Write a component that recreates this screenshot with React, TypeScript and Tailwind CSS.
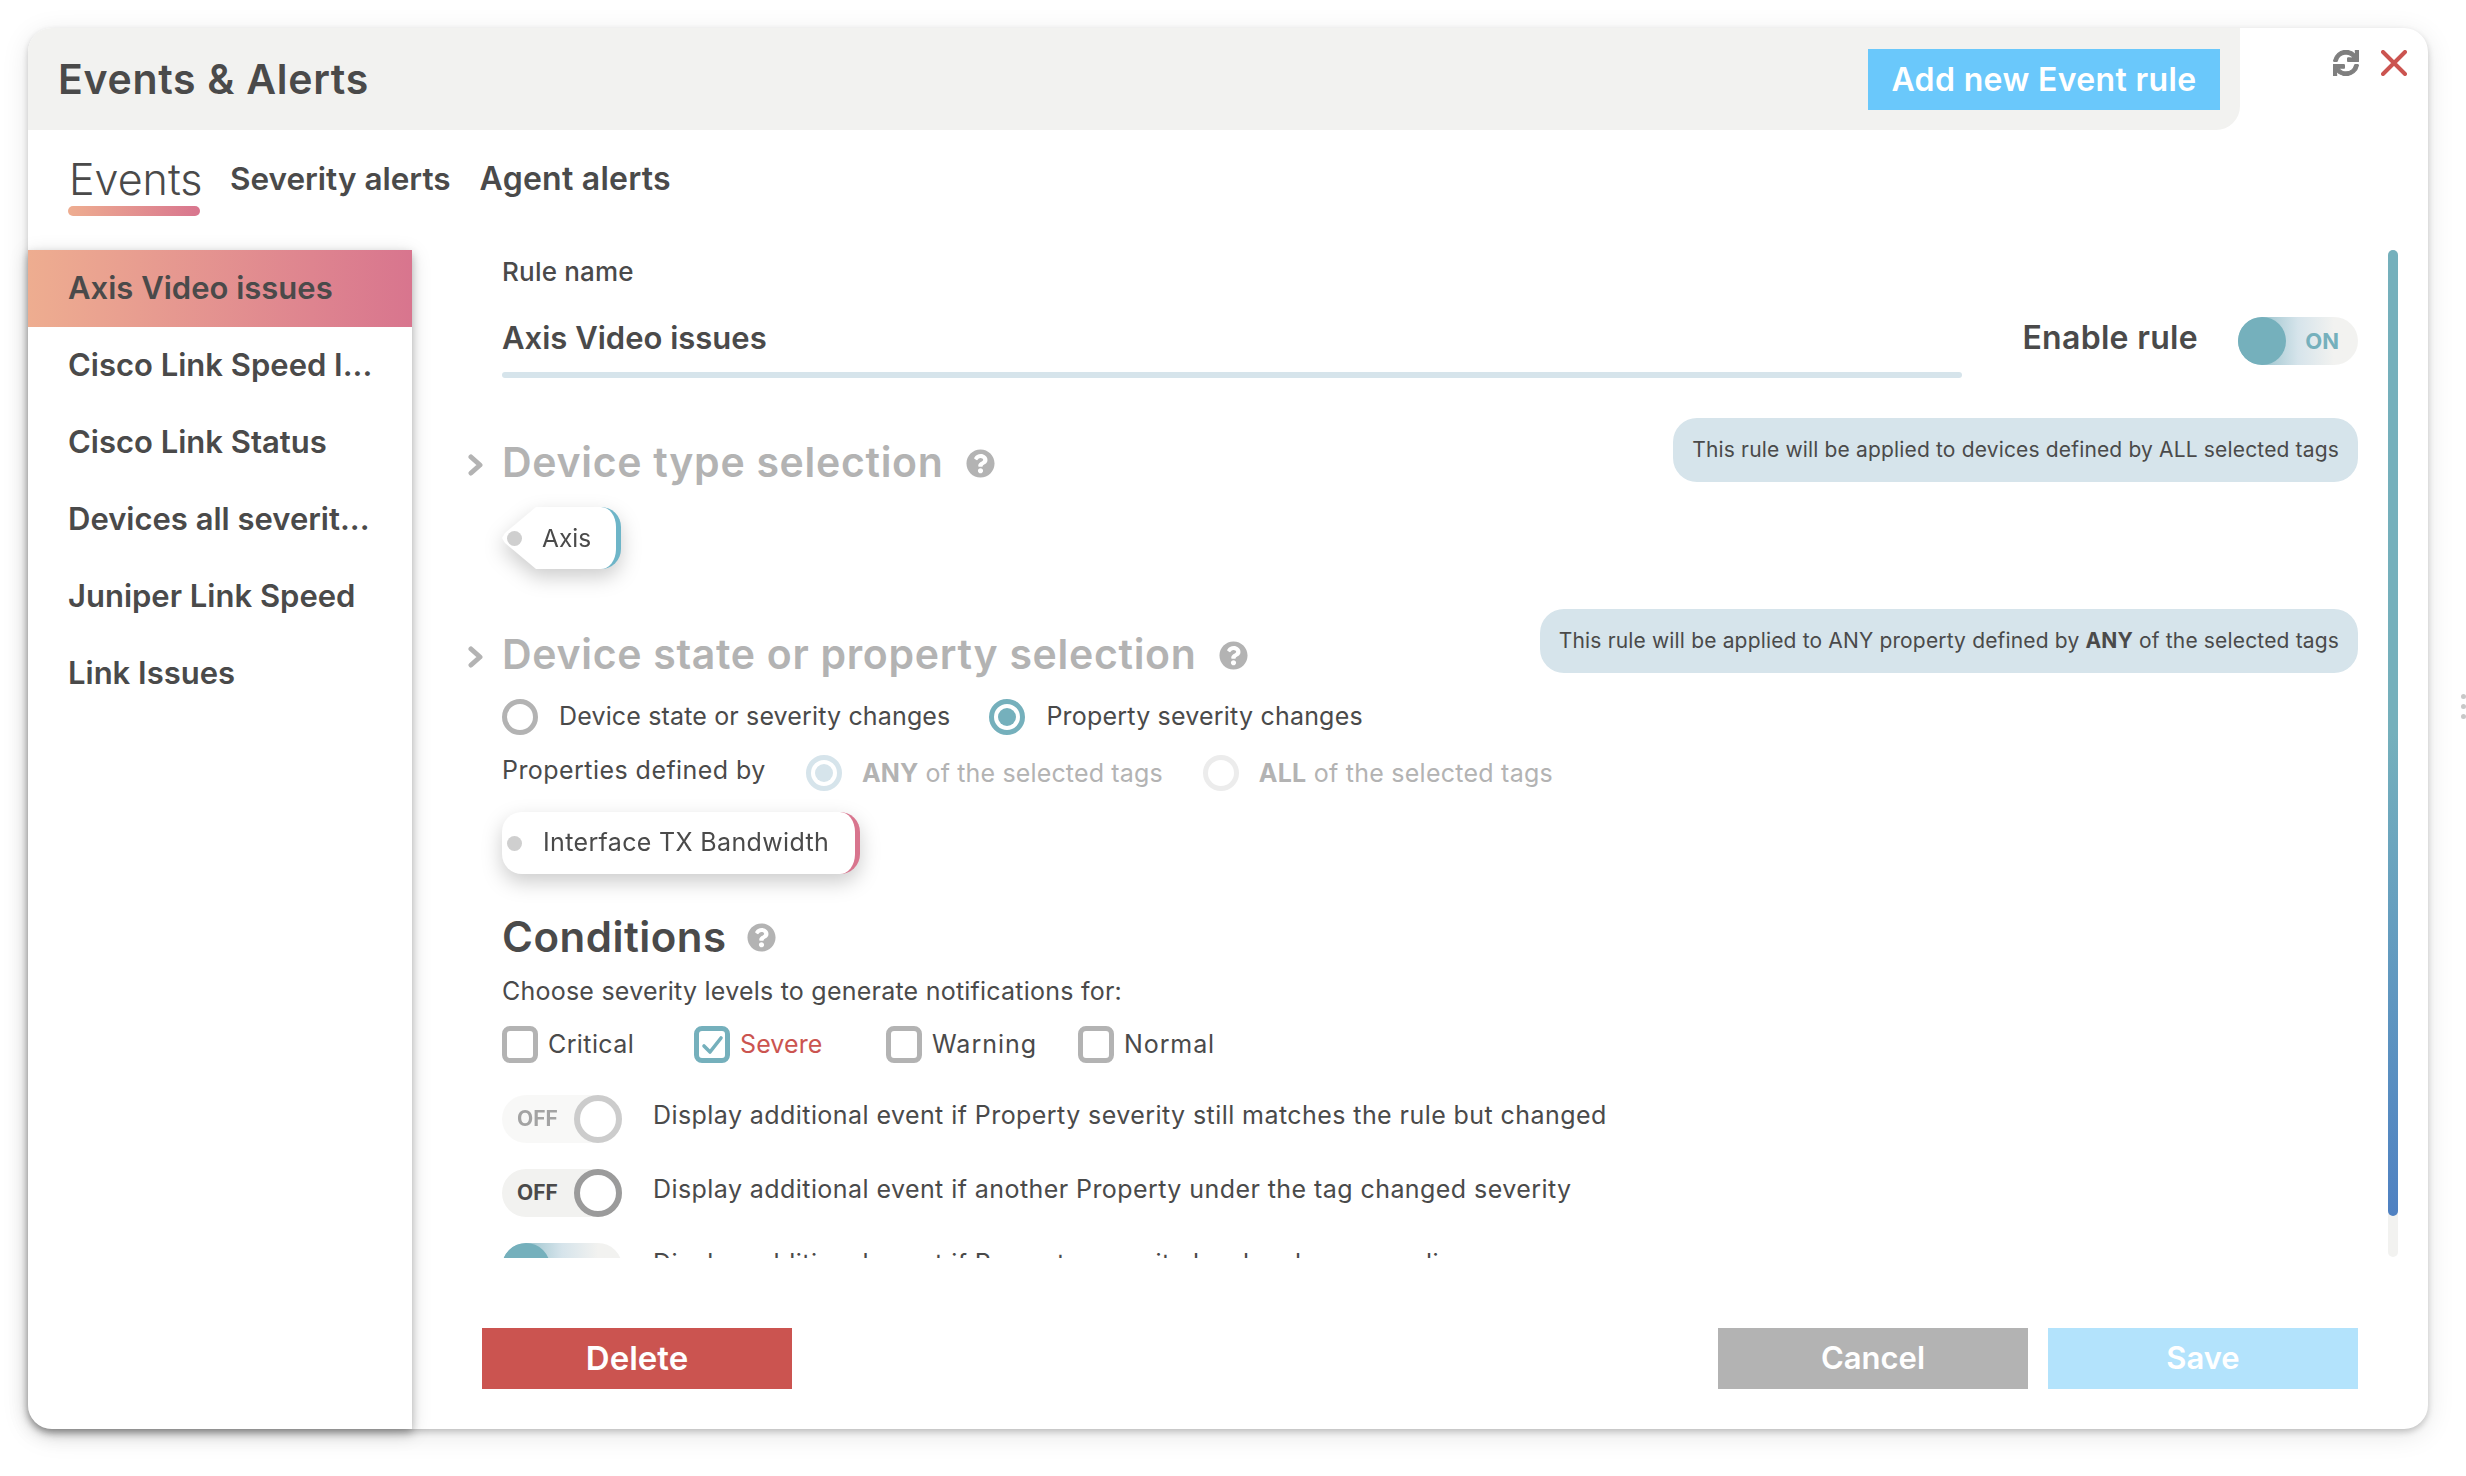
import { FaSync, FaQuestionCircle } from "react-icons/fa";

const rules = ["Axis Video issues", "Cisco Link Speed I...", "Cisco Link Status", "Devices all severit...", "Juniper Link Speed", "Link Issues"];

function Help({ className = "" }: { className?: string }) {
  return <FaQuestionCircle className={`h-[29px] w-[29px] text-[#b3b3b3] ${className}`} />;
}

function Toggle({ on, dim }: { on?: boolean; dim?: boolean }) {
  if (on) {
    return (
      <div className="relative flex h-12 w-[120px] shrink-0 items-center justify-end overflow-hidden rounded-full bg-gradient-to-r from-[#75b0bc] via-[#d6e4eb] to-[#f2f2f0] to-80% pr-[19px]">
        <div className="absolute top-0 left-0 h-12 w-12 rounded-full bg-[#75b0bc]" />
        <span className="text-[22px] font-bold text-[#75b0bc]">ON</span>
      </div>
    );
  }
  return (
    <div className={`flex h-12 w-[120px] shrink-0 items-center justify-between rounded-full bg-[#f2f2f0] pl-[15px] ${dim ? "opacity-50" : ""}`}>
      <span className="text-[21px] font-bold text-[#4a4a4a]">OFF</span>
      <div className="h-12 w-12 rounded-full border-[6px] border-[#9b9b9b] bg-white" />
    </div>
  );
}

function Radio({ checked, faded }: { checked?: boolean; faded?: boolean }) {
  const ring = checked ? (faded ? "border-[#d6e4eb]" : "border-[#75b0bc]") : faded ? "border-[#ececec]" : "border-[#b3b3b3]";
  return (
    <div className={`flex h-9 w-9 shrink-0 items-center justify-center rounded-full border-[5px] bg-white ${ring}`}>
      {checked && <div className={`h-[18px] w-[18px] rounded-full ${faded ? "bg-[#d6e4eb]" : "bg-[#75b0bc]"}`} />}
    </div>
  );
}

function Check({ label, spacing, checked }: { label: string; spacing: string; checked?: boolean }) {
  return (
    <div className="flex w-[192px] items-center gap-[10px]">
      <div className={`flex h-[37px] w-9 items-center justify-center rounded-[8px] border-[5px] ${checked ? "border-[#75b0bc]" : "border-[#b3b3b3]"}`}>
        {checked && (
          <svg viewBox="0 0 24 24" className="h-6 w-6" fill="none" stroke="#75b0bc" strokeWidth="3.6" strokeLinecap="round" strokeLinejoin="round">
            <path d="M4 13l6 6L21 5" />
          </svg>
        )}
      </div>
      <span className={`text-[25px] ${spacing} ${checked ? "text-[#cb5450]" : "text-[#4a4a4a]"}`}>{label}</span>
    </div>
  );
}

function ToggleRow({ text, on, dim }: { text: string; on?: boolean; dim?: boolean }) {
  return (
    <div className="mt-[26px] flex items-center gap-[31px]">
      <Toggle on={on} dim={dim} />
      <span className="pb-[5px] text-[25px] tracking-[0.43px] whitespace-nowrap text-[#4a4a4a]">{text}</span>
    </div>
  );
}

function Note({ children }: { children: React.ReactNode }) {
  return (
    <div className="flex h-16 items-center rounded-[24px] bg-[#d6e4eb] px-[19px] text-[21px] tracking-[0.16px] whitespace-nowrap text-[#4a4a4a]">
      {children}
    </div>
  );
}

function Heading({ text }: { text: string }) {
  return (
    <div className="-ml-[34px] flex items-center">
      <svg viewBox="0 0 15 22" className="mt-[5px] mr-[19px] h-[22px] w-[15px]" fill="none" stroke="#b3b3b3" strokeWidth="5" strokeLinecap="round" strokeLinejoin="round">
        <path d="M3 3l9 8-9 8" />
      </svg>
      <h2 className="text-[41px] font-semibold tracking-[0.7px] whitespace-nowrap text-[#b3b3b3]">{text}</h2>
      <Help className="mt-[2px] ml-[22px]" />
    </div>
  );
}

export default function App() {
  return (
    <div className="relative h-[1476px] w-full overflow-hidden bg-white pt-[28px] pl-[28px] font-['Inter',sans-serif] text-[#4a4a4a]">
      <div className="flex h-[1401px] w-[2400px] flex-col rounded-[24px] bg-white shadow-[0_3px_6px_rgba(0,0,0,0.2),0_6px_28px_rgba(0,0,0,0.1)]">
        {/* Header */}
        <div className="flex h-[102px] shrink-0">
          <div className="flex w-[2212px] items-center justify-between rounded-tl-[24px] rounded-br-[24px] bg-[#f2f2f0] pr-5 pl-[30px]">
            <h1 className="pt-[2px] text-[41px] font-semibold tracking-[0.7px]">Events &amp; Alerts</h1>
            <button className="h-[61px] w-[352px] bg-[#6ac8fb] pt-[2px] text-[32px] font-semibold tracking-[0.35px] text-white">Add new Event rule</button>
          </div>
          <div className="flex flex-1 items-start gap-[22px] pt-[22px] pl-[93px]">
            <FaSync className="h-[26px] w-[26px] text-[#7f7f7f]" stroke="currentColor" strokeWidth={24} />
            <svg viewBox="0 0 26 26" className="h-[26px] w-[26px]" fill="none" stroke="#cb5450" strokeWidth="4" strokeLinecap="round">
              <path d="M2 2l22 22M24 2L2 24" />
            </svg>
          </div>
        </div>

        {/* Tabs */}
        <div className="flex h-[120px] shrink-0 items-start gap-[30px] pt-[26px] pl-[40px]">
          <div className="flex w-[132px] flex-col">
            <span className="pl-px text-[43px] leading-[46px] font-light">Events</span>
            <div className="mt-[4px] h-[10px] w-[132px] rounded-full bg-gradient-to-r from-[#eead90] to-[#d8758e]" />
          </div>
          <span className="text-[31.5px] leading-[46px] font-semibold">Severity alerts</span>
          <span className="-ml-[1px] text-[32px] leading-[46px] font-semibold tracking-[0.25px]">Agent alerts</span>
        </div>

        <div className="flex min-h-0 flex-1">
          {/* Rule list */}
          <div className="w-[384px] shrink-0 rounded-bl-[24px] bg-white shadow-[0_4px_8px_rgba(0,0,0,0.25),0_4px_20px_rgba(0,0,0,0.15)]">
            {rules.map((r, i) => (
              <div
                key={r}
                className={`flex h-[77px] items-center pl-[40px] text-[31px] font-semibold whitespace-nowrap ${i === 0 ? "bg-gradient-to-r from-[#eead90] to-[#d8758e]" : ""}`}
              >
                {r}
              </div>
            ))}
          </div>

          <div className="flex min-w-0 flex-1 flex-col">
            <div className="flex h-[1008px] shrink-0 gap-[30px] pr-[30px]">
              {/* Scrolling form */}
              <div className="h-full w-[1946px] shrink-0 overflow-hidden pl-[90px]">
                <div className="flex h-[42px] items-center text-[26px] font-medium tracking-[0.2px]">Rule name</div>
                <div className="flex h-[86px] items-start">
                  <div className="h-[86px] w-[1462px]">
                    <div className="flex h-[80px] items-center pt-[12px] text-[31px] font-semibold">Axis Video issues</div>
                    <div className="h-[6px] rounded-full bg-[#d6e4eb]" />
                  </div>
                  <div className="ml-[60px] flex h-[80px] items-center pt-[12px] text-[32px] font-semibold tracking-[0.3px] whitespace-nowrap">Enable rule</div>
                  <div className="ml-[40px] pt-[25px]">
                    <Toggle on />
                  </div>
                </div>

                {/* Device type */}
                <div className="mt-[40px] flex h-16 items-start justify-between">
                  <div className="mt-[14px]">
                    <Heading text="Device type selection" />
                  </div>
                  <Note>This rule will be applied to devices defined by ALL selected tags</Note>
                </div>
                <div className="mt-[25px] w-fit drop-shadow-[0_8px_10px_rgba(0,0,0,0.2)]">
                  <div className="flex h-[62px] w-[119px] items-center rounded-r-[20px] border-r-[5px] border-[#6eb5c8] bg-white pl-[5px] [clip-path:polygon(34px_0,3px_26px,0_31px,3px_36px,34px_100%,100%_100%,100%_0)]">
                    <div className="h-[15px] w-[15px] rounded-full bg-[#cfcfcf]" />
                    <span className="ml-[20px] text-[24.5px]">Axis</span>
                  </div>
                </div>

                {/* Device state */}
                <div className="mt-[40px] flex h-16 items-start justify-between">
                  <div className="mt-[15px]">
                    <Heading text="Device state or property selection" />
                  </div>
                  <Note>
                    <span>
                      This rule will be applied to ANY property defined by <b>ANY</b> of the selected tags
                    </span>
                  </Note>
                </div>
                <div className="mt-[25px] flex items-center">
                  <Radio />
                  <span className="ml-[21px] text-[25px] tracking-[0.15px]">Device state or severity changes</span>
                  <div className="ml-[39px]">
                    <Radio checked />
                  </div>
                  <span className="ml-[21px] text-[25px] tracking-[0.2px]">Property severity changes</span>
                </div>
                <div className="mt-[16px] flex items-center">
                  <span className="pb-[6px] text-[25px] tracking-[0.45px]">Properties defined by</span>
                  <div className="ml-[40px]">
                    <Radio checked faded />
                  </div>
                  <span className="ml-[20px] text-[25px] tracking-[0.15px] text-[#b3b3b3]">
                    <b>ANY</b> of the selected tags
                  </span>
                  <div className="ml-[40px]">
                    <Radio faded />
                  </div>
                  <span className="ml-[20px] text-[25px] tracking-[0.25px] text-[#b3b3b3]">
                    <b>ALL</b> of the selected tags
                  </span>
                </div>
                <div className="mt-[17px] w-fit drop-shadow-[0_8px_10px_rgba(0,0,0,0.2)]">
                  <div className="flex h-[62px] w-[358px] items-center rounded-[20px] border-r-[5px] border-[#d8758e] bg-white pl-[5px]">
                    <div className="h-[15px] w-[15px] rounded-full bg-[#cfcfcf]" />
                    <span className="ml-[21px] text-[25px] tracking-[0.35px] whitespace-nowrap">Interface TX Bandwidth</span>
                  </div>
                </div>

                {/* Conditions */}
                <div className="mt-[40px] flex h-[44px] items-center">
                  <h2 className="text-[42px] font-semibold tracking-[0.5px]">Conditions</h2>
                  <Help className="mt-[2px] ml-[20px]" />
                </div>
                <div className="mt-[14px] flex h-[40px] items-center text-[25px] tracking-[0.23px]">Choose severity levels to generate notifications for:</div>
                <div className="mt-[14px] flex">
                  <Check label="Critical" spacing="tracking-[0.4px]" />
                  <Check label="Severe" spacing="tracking-[0.1px]" checked />
                  <Check label="Warning" spacing="tracking-[1px]" />
                  <Check label="Normal" spacing="tracking-[0.9px]" />
                </div>
                <div className="mt-[5px] flex flex-col">
                  <ToggleRow text="Display additional event if Property severity still matches the rule but changed" dim />
                  <ToggleRow text="Display additional event if another Property under the tag changed severity" />
                  <ToggleRow text="Display additional event if Property severity level no longer applies" on />
                </div>
              </div>

              {/* Scrollbar */}
              <div className="h-[1007px] w-[10px] shrink-0 rounded-full bg-[#f2f2f0]">
                <div className="h-[966px] rounded-full bg-gradient-to-b from-[#75b0bc] via-[#75b0bc] to-[#4f81c2]" />
              </div>
            </div>

            {/* Footer */}
            <div className="mt-[70px] flex pr-[70px] pl-[70px]">
              <button className="h-[61px] w-[310px] bg-[#cb5450] text-[33px] font-semibold text-white">Delete</button>
              <button className="ml-auto h-[61px] w-[310px] bg-[#b3b3b3] text-[31px] font-semibold text-white">Cancel</button>
              <button className="ml-[20px] h-[61px] w-[310px] bg-[#b3e3fc] text-[31px] font-semibold text-white">Save</button>
            </div>
          </div>
        </div>
      </div>

      {/* Sliver of the resize grip at the window edge */}
      <div className="absolute top-[694px] left-[2461px] flex flex-col gap-[5px]">
        <div className="h-[5px] w-[5px] rounded-full bg-[#c8c8c8]" />
        <div className="h-[5px] w-[5px] rounded-full bg-[#c8c8c8]" />
        <div className="h-[5px] w-[5px] rounded-full bg-[#c8c8c8]" />
      </div>
    </div>
  );
}
